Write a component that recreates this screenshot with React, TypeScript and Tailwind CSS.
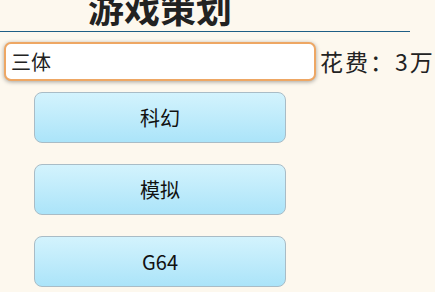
const genres = ['科幻', '模拟', 'G64'];

export default function App() {
    return (
        <div
            className="w-[435px] h-[292px] overflow-hidden bg-[#fdf8ee] text-[#222]"
            style={{ fontFamily: '"Noto Sans CJK SC", "Noto Sans", sans-serif' }}
        >
            <div className="w-[410px] border-b border-[#1f5f86] h-[32px] flex items-end justify-center">
                <h1 className="text-[36px] font-bold leading-none mb-[6px] ml-[-90px] text-[#222]">游戏策划</h1>
            </div>

            <div className="flex items-center mt-[10px] pl-[4px]">
                <div className="w-[312px] h-[39px] rounded-[7px] border-2 border-[#eea764] bg-white shadow-[0_1px_4px_rgba(0,0,0,0.35)] flex items-center px-[5px] text-[20px]">
                    三体
                </div>
                <span className="ml-[4px] text-[23px] tracking-[2px] whitespace-nowrap">花费：3万</span>
            </div>

            <div className="flex flex-col gap-[21px] mt-[11px] pl-[34px]">
                {genres.map((g) => (
                    <button
                        key={g}
                        className="w-[252px] h-[51px] rounded-[8px] border border-[#a9bcc6] bg-gradient-to-b from-[#d3f3fd] to-[#abe4f9] text-[20px] text-[#111] flex items-center justify-center"
                    >
                        {g}
                    </button>
                ))}
            </div>
        </div>
    );
}
